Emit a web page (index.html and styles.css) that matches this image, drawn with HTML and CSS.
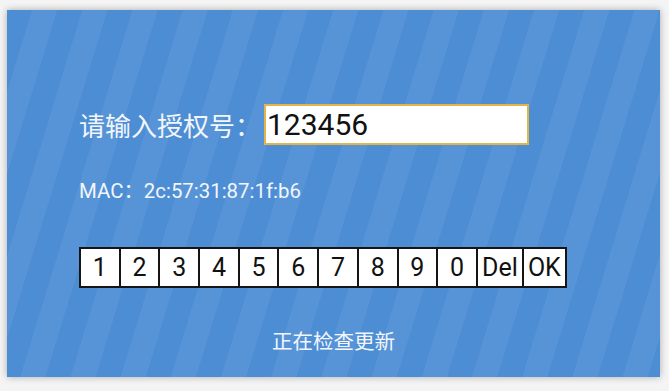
FILE: index.html
```html
<!DOCTYPE html>
<html lang="zh">
<head>
<meta charset="utf-8">
<link rel="stylesheet" href="styles.css">
</head>
<body>
<div class="panel">
  <div class="auth-row">
    <span class="label">请输入授权号：</span>
    <div class="input">123456</div>
  </div>
  <div class="mac">MAC：2c:57:31:87:1f:b6</div>
  <div class="keypad">
    <div class="key">1</div>
    <div class="key">2</div>
    <div class="key">3</div>
    <div class="key">4</div>
    <div class="key">5</div>
    <div class="key">6</div>
    <div class="key">7</div>
    <div class="key">8</div>
    <div class="key">9</div>
    <div class="key">0</div>
    <div class="key wide">Del</div>
    <div class="key ok">OK</div>
  </div>
  <div class="status">正在检查更新</div>
</div>
</body>
</html>
```
FILE: styles.css
```css
html, body {
  margin: 0;
  padding: 0;
  background: #f4f4f4;
}
body {
  width: 669px;
  height: 391px;
  overflow: hidden;
  font-family: Roboto, "Noto Sans CJK SC", sans-serif;
}
.panel {
  box-sizing: border-box;
  width: 653px;
  height: 367px;
  margin: 10px 0 0 7px;
  padding: 94px 0 0 72px;
  background: repeating-linear-gradient(107deg, #4d8dd3 0 24px, #5794d7 24px 48px);
  box-shadow: 0 0 7px rgba(0, 0, 0, 0.3);
  display: flex;
  flex-direction: column;
  color: #f2f6fb;
}
.auth-row {
  display: flex;
  align-items: center;
  height: 41px;
}
.label {
  font-size: 26px;
  width: 185px;
  white-space: nowrap;
}
.input {
  box-sizing: border-box;
  width: 265px;
  height: 41px;
  border: 2px solid #e2b44a;
  background: #fff;
  color: #111;
  font-size: 30px;
  line-height: 37px;
  padding-left: 1px;
}
.mac {
  margin-top: 33px;
  font-size: 20.4px;
  line-height: 26px;
}
.keypad {
  margin-top: 43px;
  display: flex;
  align-self: flex-start;
  border: 1px solid #151515;
  background: #fff;
}
.key {
  box-sizing: border-box;
  width: 39.7px;
  height: 39px;
  border: 1px solid #151515;
  color: #111;
  font-size: 25px;
  line-height: 37px;
  text-align: center;
}
.key.wide {
  width: 46px;
}
.key.ok {
  width: 43px;
}
.status {
  margin-top: 40px;
  margin-left: -72px;
  text-align: center;
  font-size: 20.5px;
  line-height: 28px;
}
```
